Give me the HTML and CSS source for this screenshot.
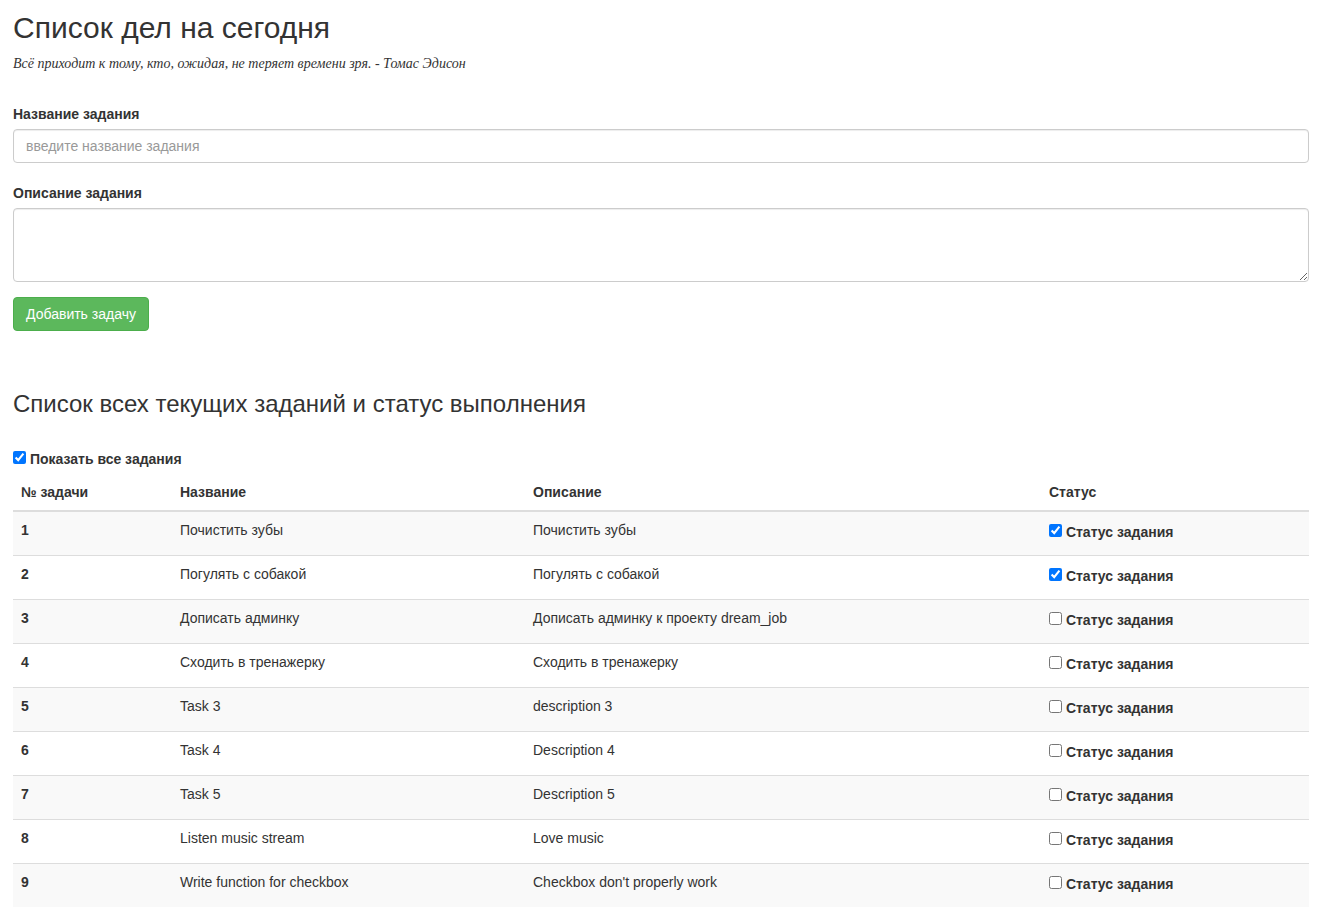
FILE: index.html
```html
<!DOCTYPE html>
<html lang="ru">
<head>
<meta charset="utf-8">
<title>Список дел на сегодня</title>
<link rel="stylesheet" href="styles.css">
</head>
<body>
<div class="container">
  <h1 class="title">Список дел на сегодня</h1>
  <p class="quote">Всё приходит к тому, кто, ожидая, не теряет времени зря. - Томас Эдисон</p>

  <form class="task-form">
    <div class="form-group">
      <label class="form-label" for="name">Название задания</label>
      <input class="form-control" id="name" type="text" placeholder="введите название задания">
    </div>
    <div class="form-group form-group-last">
      <label class="form-label" for="desc">Описание задания</label>
      <textarea class="form-control textarea" id="desc" rows="3"></textarea>
    </div>
    <button class="btn-success" type="button">Добавить задачу</button>
  </form>

  <h3 class="subtitle">Список всех текущих заданий и статус выполнения</h3>

  <label class="show-all"><input type="checkbox" class="cb" checked> Показать все задания</label>

  <table class="tasks">
    <colgroup>
      <col class="c1"><col class="c2"><col class="c3"><col class="c4">
    </colgroup>
    <thead>
      <tr><th>№ задачи</th><th>Название</th><th>Описание</th><th>Статус</th></tr>
    </thead>
    <tbody>
      <tr><th>1</th><td>Почистить зубы</td><td>Почистить зубы</td><td><label class="status"><input type="checkbox" class="cb" checked> Статус задания</label></td></tr>
      <tr><th>2</th><td>Погулять с собакой</td><td>Погулять с собакой</td><td><label class="status"><input type="checkbox" class="cb" checked> Статус задания</label></td></tr>
      <tr><th>3</th><td>Дописать админку</td><td>Дописать админку к проекту dream_job</td><td><label class="status"><input type="checkbox" class="cb"> Статус задания</label></td></tr>
      <tr><th>4</th><td>Сходить в тренажерку</td><td>Сходить в тренажерку</td><td><label class="status"><input type="checkbox" class="cb"> Статус задания</label></td></tr>
      <tr><th>5</th><td>Task 3</td><td>description 3</td><td><label class="status"><input type="checkbox" class="cb"> Статус задания</label></td></tr>
      <tr><th>6</th><td>Task 4</td><td>Description 4</td><td><label class="status"><input type="checkbox" class="cb"> Статус задания</label></td></tr>
      <tr><th>7</th><td>Task 5</td><td>Description 5</td><td><label class="status"><input type="checkbox" class="cb"> Статус задания</label></td></tr>
      <tr><th>8</th><td>Listen music stream</td><td>Love music</td><td><label class="status"><input type="checkbox" class="cb"> Статус задания</label></td></tr>
      <tr><th>9</th><td>Write function for checkbox</td><td>Checkbox don't properly work</td><td><label class="status"><input type="checkbox" class="cb"> Статус задания</label></td></tr>
    </tbody>
  </table>
</div>
</body>
</html>
```

FILE: styles.css
```css
* { box-sizing: border-box; }

html, body {
  margin: 0;
  padding: 0;
  background: #fff;
}

body {
  font-family: "Liberation Sans", Arial, Helvetica, sans-serif;
  font-size: 14px;
  line-height: 20px;
  color: #333;
}

.container {
  padding: 11px 10px 0 13px;
}

.title {
  margin: 0;
  font-size: 30px;
  line-height: 33px;
  font-weight: 400;
  color: #333;
}

.quote {
  margin: 10px 0 30px;
  font-family: "Liberation Serif", "Times New Roman", serif;
  font-style: italic;
  font-size: 14px;
  line-height: 20px;
  color: #333;
}

.task-form { margin: 0; }

.form-group { margin-bottom: 20px; }
.form-group-last { margin-bottom: 15px; }

.form-label {
  display: block;
  margin-bottom: 5px;
  font-weight: 700;
}

.form-control {
  display: block;
  width: 100%;
  height: 34px;
  padding: 6px 12px;
  font-family: inherit;
  font-size: 14px;
  line-height: 20px;
  color: #555;
  background: #fff;
  border: 1px solid #ccc;
  border-radius: 4px;
  box-shadow: inset 0 1px 1px rgba(0,0,0,.075);
  margin: 0;
}

.form-control::placeholder { color: #999; }

.textarea {
  height: 74px;
  resize: vertical;
}

.btn-success {
  display: block;
  height: 34px;
  padding: 6px 12px;
  font-family: inherit;
  font-size: 14px;
  line-height: 20px;
  color: #fff;
  background: #5cb85c;
  border: 1px solid #4cae4c;
  border-radius: 4px;
  width: 136px;
  text-align: center;
  cursor: pointer;
}

.subtitle {
  margin: 60px 0 32px;
  font-size: 24px;
  line-height: 26px;
  font-weight: 400;
  color: #333;
}

.show-all {
  display: block;
  margin-bottom: 5px;
  font-weight: 700;
  line-height: 20px;
}

.cb {
  width: 13px;
  height: 13px;
  margin: 0;
  vertical-align: 0;
}

.tasks {
  width: 100%;
  border-collapse: collapse;
  border-spacing: 0;
  table-layout: fixed;
}

.c1 { width: 159px; }
.c2 { width: 353px; }
.c3 { width: 516px; }
.c4 { width: auto; }

.tasks th,
.tasks td {
  padding: 8px;
  text-align: left;
  vertical-align: top;
  line-height: 20px;
}

.tasks thead th {
  font-weight: 700;
  border-bottom: 2px solid #ddd;
}

.tasks tbody th,
.tasks tbody td {
  border-top: 1px solid #ddd;
}

.tasks tbody th { font-weight: 700; }

.tasks tbody tr:nth-child(odd) { background: #f9f9f9; }

.status {
  display: inline-block;
  margin: 2px 0 5px;
  font-weight: 700;
}
```
